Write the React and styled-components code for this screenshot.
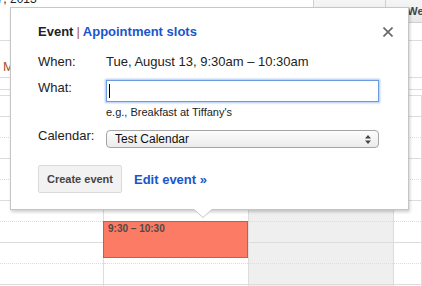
import React from 'react';
import styled, {createGlobalStyle} from 'styled-components';

const GlobalStyle = createGlobalStyle`
    html, body {
        margin: 0;
        padding: 0;
        background: #fff;
    }
    body {
        font-family: "Liberation Sans", Arial, sans-serif;
        color: #222;
    }
`

const columns = [
    {w: 104, label: 'Mon 8/12'},
    {w: 145, label: 'Tue 8/13'},
    {w: 145, label: 'Wed 8/14', shade: true},
    {w: 0, label: ''},
]

const rows = Array.from({length: 10}, (_, i) => i)

export default function App() {
    return (
        <>
        <GlobalStyle />
        <Page>
            <TopBar>
                <RangeTitle>17, 2013</RangeTitle>
                <ViewGroup>
                    <ViewButton>Day</ViewButton>
                    <ViewButton>Week</ViewButton>
                </ViewGroup>
            </TopBar>

            <DayHeads>
                {columns.map((c, i) => (
                    <DayHead key={i} $w={c.w}>{c.label}</DayHead>
                ))}
            </DayHeads>
            <AllDay />
            <Divider />

            <Grid>
                {columns.map((c, ci) => (
                    <Column key={ci} $w={c.w} $shade={c.shade}>
                        {rows.map(r => <Slot key={r} $half={r % 2 === 1} />)}
                        {ci === 1 && <EventBlock>9:30 – 10:30</EventBlock>}
                    </Column>
                ))}
            </Grid>

            <Bubble>
                <TitleRow>
                    <Tabs>
                        <span>Event</span>
                        <Pipe>|</Pipe>
                        <TabLink>Appointment slots</TabLink>
                    </Tabs>
                    <Close width="10" height="10" viewBox="0 0 10 10">
                        <path d="M0.5 0.5 L9.5 9.5 M9.5 0.5 L0.5 9.5" />
                    </Close>
                </TitleRow>

                <FormRow $top={14}>
                    <Label>When:</Label>
                    <Value>Tue, August 13, 9:30am – 10:30am</Value>
                </FormRow>

                <FormRow $top={10}>
                    <Label>What:</Label>
                    <div>
                        <TextBox><Caret /></TextBox>
                        <Hint>e.g., Breakfast at Tiffany's</Hint>
                    </div>
                </FormRow>

                <FormRow $top={9}>
                    <Label>Calendar:</Label>
                    <Select>
                        <span>Test Calendar</span>
                        <svg width="6" height="9" viewBox="0 0 6 9">
                            <path d="M0 3.5 L3 0 L6 3.5 Z M0 5.5 L3 9 L6 5.5 Z" fill="#444" />
                        </svg>
                    </Select>
                </FormRow>

                <Actions>
                    <CreateButton>Create event</CreateButton>
                    <EditLink>Edit event »</EditLink>
                </Actions>

                <Pointer />
            </Bubble>
        </Page>
        </>
    )
}

const Page = styled.div`
    position: relative;
    width: 422px;
    height: 286px;
    overflow: hidden;
    background: #fff;
`

const TopBar = styled.div`
    display: flex;
    align-items: flex-start;
    height: 24px;
`

const RangeTitle = styled.div`
    flex: 1;
    margin: -7px 0 0 -10px;
    font-size: 12px;
    line-height: 12px;
    color: #222;
    white-space: nowrap;
`

const ViewGroup = styled.div`
    display: flex;
    margin-right: -35px;
`

const ViewButton = styled.div`
    width: 72px;
    height: 23px;
    box-sizing: border-box;
    border: 1px solid #d0d0d0;
    border-top: none;
    border-right: none;
    background: linear-gradient(#f5f5f5, #e9e9e9);
    font-size: 11px;
    font-weight: bold;
    color: #444;
    display: flex;
    align-items: center;
    justify-content: center;
`

const DayHeads = styled.div`
    display: flex;
    margin-top: 16px;
    height: 38px;
    box-sizing: border-box;
    border-top: 1px solid #ddd;
    border-bottom: 1px solid #ddd;
`

const DayHead = styled.div`
    ${p => p.$w ? `width: ${p.$w}px;` : 'flex: 1;'}
    box-sizing: border-box;
    padding: 18px 0 0 3px;
    font-size: 13px;
    line-height: 16px;
    color: #a3552a;
    white-space: nowrap;
`

const AllDay = styled.div`
    height: 11px;
    border-bottom: 1px solid #ddd;
`

const Divider = styled.div`
    height: 5px;
    border-bottom: 1px solid #ddd;
`

const Grid = styled.div`
    display: flex;
`

const Column = styled.div`
    position: relative;
    ${p => p.$w ? `width: ${p.$w}px;` : 'flex: 1;'}
    box-sizing: border-box;
    border-right: 1px solid #ddd;
    background: ${p => p.$shade ? '#efefef' : '#fff'};
`

const Slot = styled.div`
    height: 20px;
    border-bottom: 1px ${p => p.$half ? 'dotted' : 'solid'} #dcdcdc;
`

const EventBlock = styled.div`
    position: absolute;
    top: 125px;
    left: -1px;
    width: 145px;
    height: 37px;
    box-sizing: border-box;
    border: 1px solid #d9534a;
    background: #fb7b64;
    padding: 1px 4px 0;
    font-size: 10px;
    line-height: 12px;
    font-weight: bold;
    color: #4e4a47;
`

const Bubble = styled.div`
    position: absolute;
    left: 10px;
    top: 7px;
    z-index: 5;
    width: 399px;
    box-sizing: border-box;
    padding: 16px 15px 16px 27px;
    background: #fff;
    border: 1px solid #c6c6c6;
    box-shadow: 1px 2px 3px rgba(0, 0, 0, 0.2);
`

const Pointer = styled.span`
    position: absolute;
    left: 182px;
    top: 100%;
    width: 20px;
    height: 10px;

    &::before, &::after {
        content: '';
        position: absolute;
        left: 0;
        border-style: solid;
        border-width: 9px 10px 0;
        border-color: transparent;
    }
    &::before {
        top: 0;
        border-top-color: #c6c6c6;
    }
    &::after {
        top: -1px;
        border-top-color: #fff;
    }
`

const TitleRow = styled.div`
    display: flex;
    justify-content: space-between;
    align-items: center;
    height: 16px;
`

const Tabs = styled.div`
    font-size: 13px;
    line-height: 16px;
    font-weight: bold;
    color: #222;
`

const Pipe = styled.span`
    color: #b0582a;
    font-weight: normal;
    margin: 0 3px;
`

const TabLink = styled.span`
    color: #1a55cc;
`

const Close = styled.svg`
    stroke: #666;
    stroke-width: 1.6;
    fill: none;
`

const FormRow = styled.div`
    display: flex;
    align-items: flex-start;
    margin-top: ${p => p.$top}px;
`

const Label = styled.div`
    width: 68px;
    flex-shrink: 0;
    font-size: 13px;
    line-height: 16px;
    color: #222;
`

const Value = styled.div`
    font-size: 13px;
    line-height: 16px;
    color: #222;
`

const TextBox = styled.div`
    width: 273px;
    height: 22px;
    box-sizing: border-box;
    border: 1px solid #6d9be2;
    box-shadow: 0 0 2px 1px #a7c6f2;
    display: flex;
    align-items: center;
    padding-left: 2px;
`

const Caret = styled.span`
    width: 1px;
    height: 14px;
    background: #000;
`

const Hint = styled.div`
    margin-top: 3px;
    font-size: 11px;
    line-height: 14px;
    color: #222;
`

const Select = styled.div`
    margin-top: 2px;
    width: 273px;
    height: 18px;
    box-sizing: border-box;
    border: 1px solid #a5a5a5;
    border-radius: 4px;
    background: linear-gradient(#fdfdfd, #ebebeb);
    display: flex;
    align-items: center;
    justify-content: space-between;
    padding: 0 7px 0 8px;
    font-size: 12px;
    color: #111;
`

const Actions = styled.div`
    display: flex;
    align-items: center;
    gap: 12px;
    margin-top: 17px;
`

const CreateButton = styled.div`
    width: 84px;
    height: 28px;
    box-sizing: border-box;
    border: 1px solid #dadada;
    border-radius: 2px;
    background: #f2f2f2;
    display: flex;
    align-items: center;
    justify-content: center;
    font-size: 11px;
    font-weight: bold;
    color: #444;
`

const EditLink = styled.div`
    font-size: 13px;
    font-weight: bold;
    color: #1a55cc;
`
